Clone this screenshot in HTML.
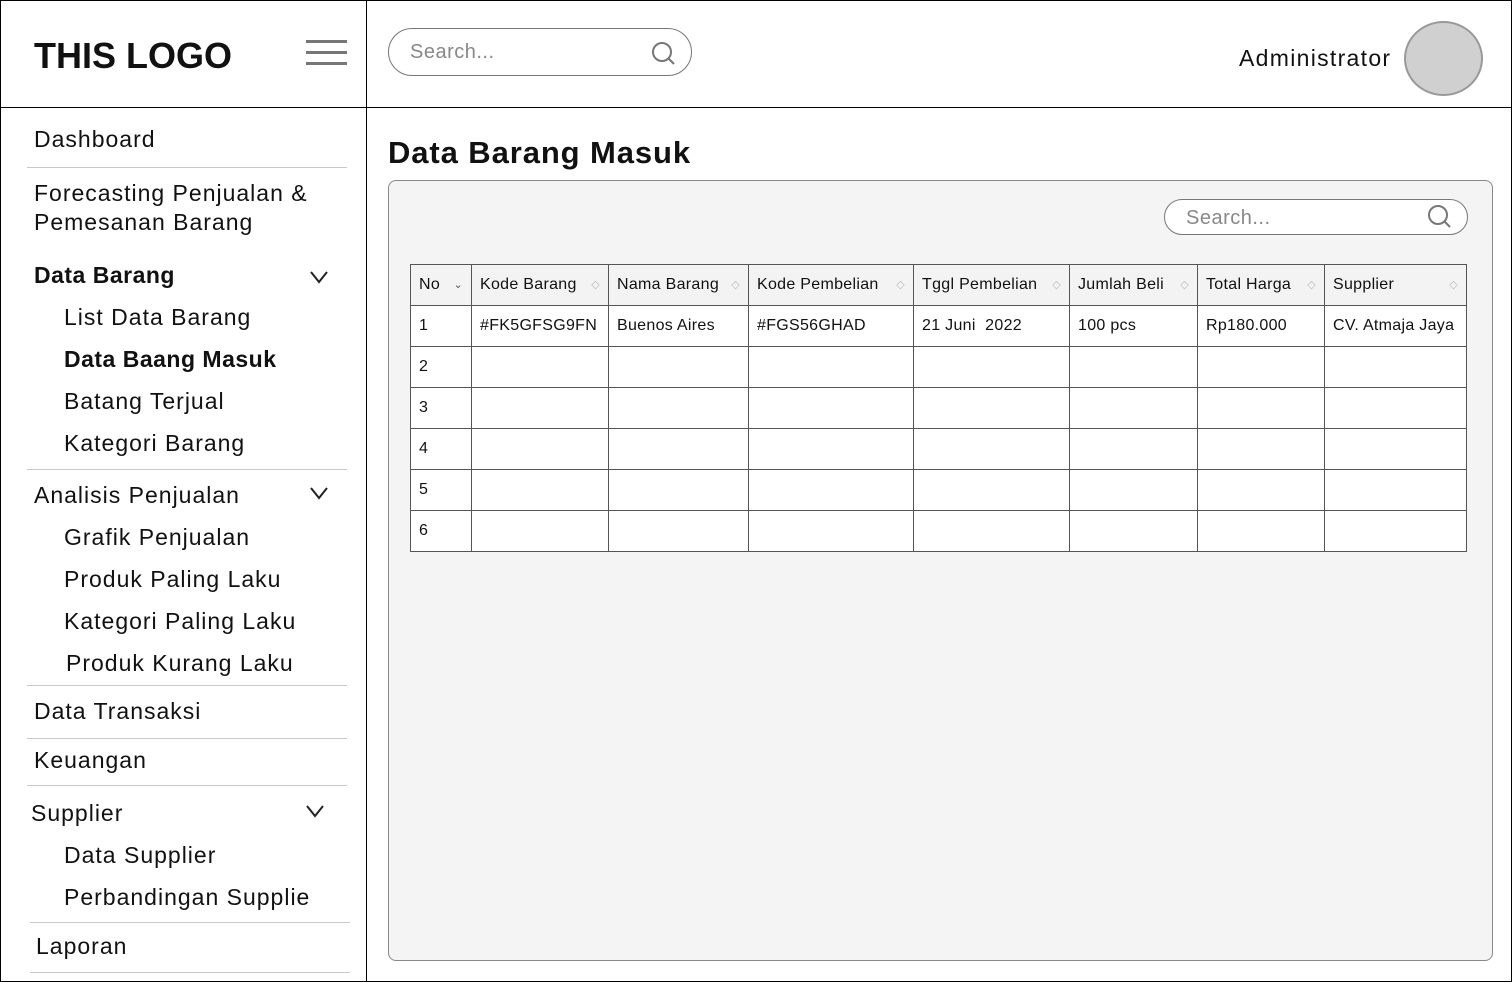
<!DOCTYPE html><html><head><style>
*{margin:0;padding:0;box-sizing:border-box}
body{width:1512px;height:982px;background:#fff;font-family:"Liberation Sans",sans-serif;color:#111;position:relative;overflow:hidden}
.a{position:absolute}
.t{position:absolute;font-size:23px;white-space:nowrap;line-height:1;letter-spacing:1px}
.hr{position:absolute;height:1px;background:#c8c8c8}
table{border-collapse:collapse;position:absolute;left:410px;top:264px;font-size:16px;letter-spacing:0.3px}
td{border:1px solid #555;height:41px;padding:0 8px;vertical-align:middle;background:#fff;white-space:nowrap}
tr:first-child td{background:#f3f3f3}
.s{color:#bbb;font-size:11px;float:right;margin-top:2px}
</style></head><body>
<div class="a" style="left:0;top:0;width:1512px;height:982px;border:1px solid #000"></div>
<div class="a" style="left:366px;top:0;width:1px;height:982px;background:#000"></div>
<div class="a" style="left:0;top:107px;width:1512px;height:1px;background:#000"></div>
<div class="t" style="left:34px;top:38px;font-size:36px;font-weight:bold;letter-spacing:0">THIS LOGO</div>
<div class="a" style="left:306px;top:40px;width:41px;height:3px;background:#777"></div>
<div class="a" style="left:306px;top:51px;width:41px;height:3px;background:#777"></div>
<div class="a" style="left:306px;top:62px;width:41px;height:3px;background:#777"></div>
<div class="a" style="left:388px;top:28px;width:304px;height:48px;border:1px solid #777;border-radius:24px"></div>
<div class="t" style="left:410px;top:42px;font-size:20px;color:#888;letter-spacing:0.5px">Search...</div>
<svg class="a" style="left:650px;top:40px" width="28" height="28"><circle cx="12" cy="12" r="9" fill="none" stroke="#777" stroke-width="2"/><line x1="18.5" y1="18.5" x2="24" y2="24" stroke="#777" stroke-width="2"/></svg>
<div class="t" style="left:1239px;top:47px;letter-spacing:1.3px">Administrator</div>
<div class="a" style="left:1404px;top:21px;width:79px;height:75px;border-radius:50%;background:#d0d0d0;border:2px solid #999"></div>
<div class="t" style="left:34px;top:128px">Dashboard</div>
<div class="hr" style="left:27px;top:167px;width:320px"></div>
<div class="t" style="left:34px;top:179px;line-height:29px">Forecasting Penjualan &amp;<br>Pemesanan Barang</div>
<div class="t" style="left:34px;top:264px;font-weight:bold;letter-spacing:0.5px">Data Barang</div>
<div class="t" style="left:64px;top:306px">List Data Barang</div>
<div class="t" style="left:64px;top:348px;font-weight:bold;letter-spacing:0.5px">Data Baang Masuk</div>
<div class="t" style="left:64px;top:390px">Batang Terjual</div>
<div class="t" style="left:64px;top:432px">Kategori Barang</div>
<div class="hr" style="left:27px;top:469px;width:320px"></div>
<div class="t" style="left:34px;top:484px">Analisis Penjualan</div>
<div class="t" style="left:64px;top:526px">Grafik Penjualan</div>
<div class="t" style="left:64px;top:568px">Produk Paling Laku</div>
<div class="t" style="left:64px;top:610px">Kategori Paling Laku</div>
<div class="t" style="left:66px;top:652px">Produk Kurang Laku</div>
<div class="hr" style="left:27px;top:685px;width:320px"></div>
<div class="t" style="left:34px;top:700px">Data Transaksi</div>
<div class="hr" style="left:27px;top:738px;width:320px"></div>
<div class="t" style="left:34px;top:749px">Keuangan</div>
<div class="hr" style="left:27px;top:785px;width:320px"></div>
<div class="t" style="left:31px;top:802px">Supplier</div>
<div class="t" style="left:64px;top:844px">Data Supplier</div>
<div class="t" style="left:64px;top:886px">Perbandingan Supplie</div>
<div class="hr" style="left:30px;top:922px;width:320px"></div>
<div class="t" style="left:36px;top:935px">Laporan</div>
<div class="hr" style="left:30px;top:972px;width:320px"></div>
<svg class="a" style="left:309px;top:270px" width="20" height="14"><polyline points="2,2 10,12 18,2" fill="none" stroke="#222" stroke-width="2"/></svg>
<svg class="a" style="left:309px;top:486px" width="20" height="14"><polyline points="2,2 10,12 18,2" fill="none" stroke="#222" stroke-width="2"/></svg>
<svg class="a" style="left:305px;top:804px" width="20" height="14"><polyline points="2,2 10,12 18,2" fill="none" stroke="#222" stroke-width="2"/></svg>
<div class="t" style="left:388px;top:137px;font-size:31px;font-weight:bold;letter-spacing:0.9px">Data Barang Masuk</div>
<div class="a" style="left:388px;top:180px;width:1105px;height:781px;background:#f4f4f4;border:1px solid #888;border-radius:8px"></div>
<div class="a" style="left:1164px;top:199px;width:304px;height:36px;border:1px solid #777;border-radius:18px;background:#fff"></div>
<div class="t" style="left:1186px;top:208px;font-size:20px;color:#888;letter-spacing:0.5px">Search...</div>
<svg class="a" style="left:1426px;top:204px" width="28" height="28"><circle cx="12" cy="11" r="9" fill="none" stroke="#777" stroke-width="2"/><line x1="18.5" y1="17.5" x2="24" y2="23" stroke="#777" stroke-width="2"/></svg>
<table>
<tr><td style="width:61px">No <span class="s" style="color:#555">⌄</span></td><td style="width:137px">Kode Barang <span class="s">◇</span></td><td style="width:140px">Nama Barang <span class="s">◇</span></td><td style="width:165px">Kode Pembelian <span class="s">◇</span></td><td style="width:156px">Tggl Pembelian <span class="s">◇</span></td><td style="width:128px">Jumlah Beli <span class="s">◇</span></td><td style="width:127px">Total Harga <span class="s">◇</span></td><td style="width:142px">Supplier <span class="s">◇</span></td></tr>
<tr><td>1</td><td>#FK5GFSG9FN</td><td>Buenos Aires</td><td>#FGS56GHAD</td><td>21 Juni&nbsp; 2022</td><td>100 pcs</td><td>Rp180.000</td><td>CV. Atmaja Jaya</td></tr>
<tr><td>2</td><td></td><td></td><td></td><td></td><td></td><td></td><td></td></tr>
<tr><td>3</td><td></td><td></td><td></td><td></td><td></td><td></td><td></td></tr>
<tr><td>4</td><td></td><td></td><td></td><td></td><td></td><td></td><td></td></tr>
<tr><td>5</td><td></td><td></td><td></td><td></td><td></td><td></td><td></td></tr>
<tr><td>6</td><td></td><td></td><td></td><td></td><td></td><td></td><td></td></tr>
</table>
</body></html>
